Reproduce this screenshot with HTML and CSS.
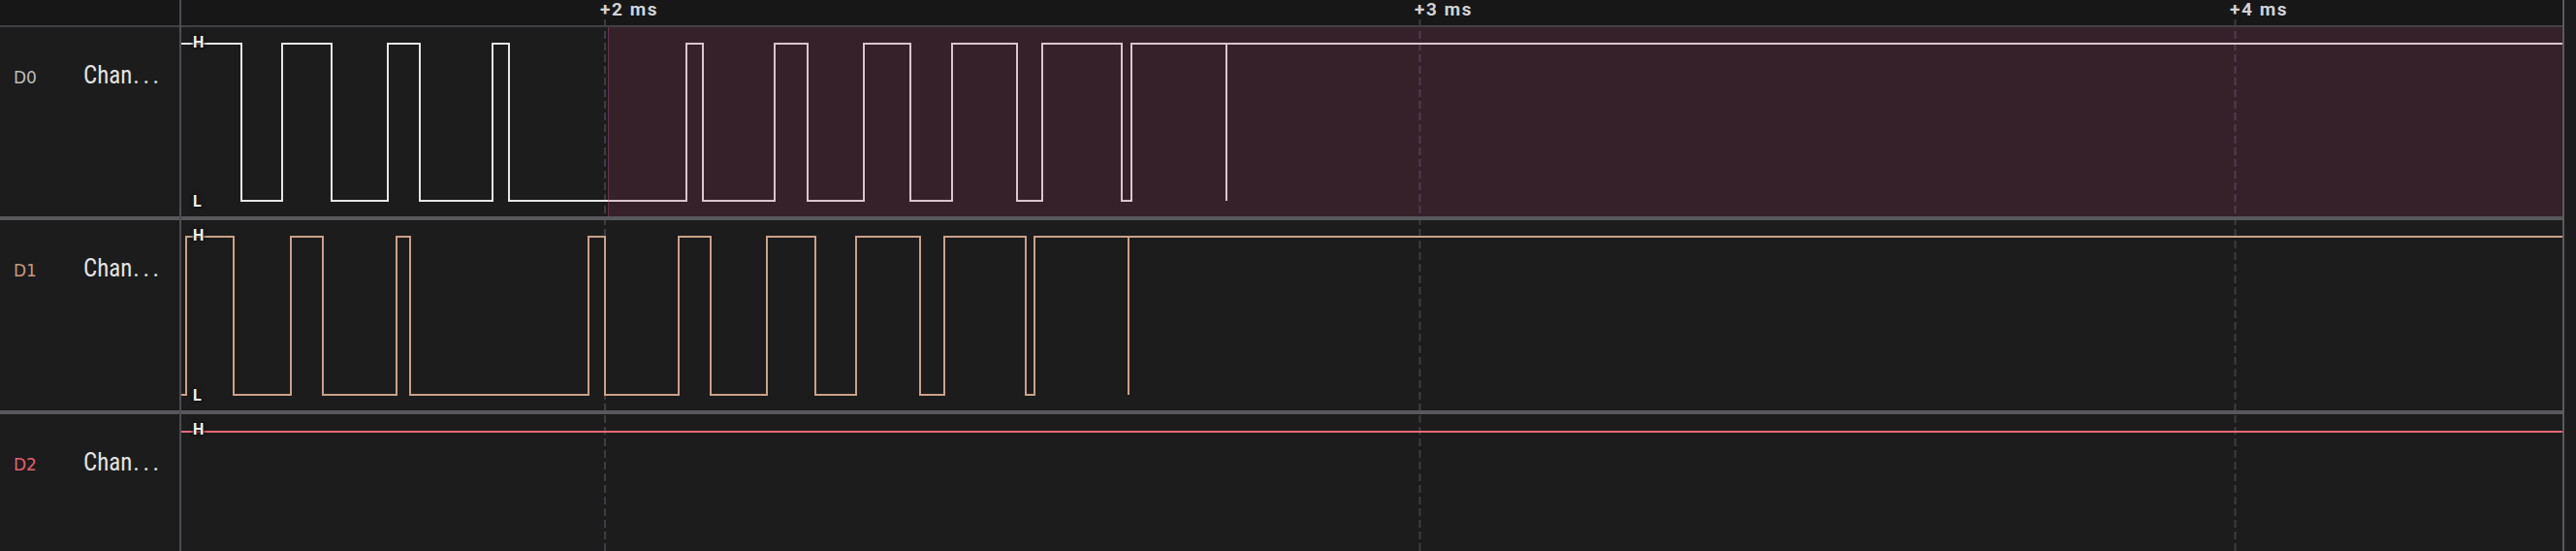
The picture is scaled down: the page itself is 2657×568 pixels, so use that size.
FILE: index.html
```html
<!DOCTYPE html>
<html lang="en">
<head>
<meta charset="utf-8">
<title>Logic analyzer</title>
<link rel="stylesheet" href="styles.css">
</head>
<body>
<div class="app">
  <div class="head">
    <span class="tick" style="left:619px">+2 ms</span>
    <span class="tick" style="left:1459px">+3 ms</span>
    <span class="tick" style="left:2300px">+4 ms</span>
  </div>
  <div class="hline head-line"></div>

  <div class="label row-a"><span class="ch ch0">D0</span><span class="name">Chan<span class="ell">...</span></span></div>
  <div class="track row-a">
    <svg class="wave" width="2456" height="195" viewBox="0 0 2456 195">
      <path class="w0" d="M0 17 H62 V179 H104 V17 H155 V179 H213 V17 H246 V179 H321 V17 H338 V179 H521 V17 H538 V179 H612 V17 H646 V179 H704 V17 H752 V179 H795 V17 H862 V179 H888 V17 H970 V179 H980 V17 H1078 V179 M1078 17 H2456"/>
    </svg>
    <div class="selection"></div>
    <span class="lvl hi">H</span>
    <span class="lvl lo">L</span>
  </div>
  <div class="hline div-a"></div>

  <div class="label row-b"><span class="ch ch1">D1</span><span class="name">Chan<span class="ell">...</span></span></div>
  <div class="track row-b">
    <svg class="wave" width="2456" height="196" viewBox="0 0 2456 196">
      <path class="w1" d="M0 180 H5 V17 H54 V180 H113 V17 H146 V180 H222 V17 H236 V180 H420 V17 H437 V180 H513 V17 H546 V180 H604 V17 H654 V180 H696 V17 H762 V180 H787 V17 H871 V180 H880 V17 H977 V180 M977 17 H2456"/>
    </svg>
    <span class="lvl hi">H</span>
    <span class="lvl lo lo-b">L</span>
  </div>
  <div class="hline div-b"></div>

  <div class="label row-c"><span class="ch ch2">D2</span><span class="name">Chan<span class="ell">...</span></span></div>
  <div class="track row-c">
    <svg class="wave" width="2456" height="141" viewBox="0 0 2456 141">
      <path class="w2" d="M0 18 H2456"/>
    </svg>
    <span class="lvl hi">H</span>
  </div>

  <svg class="grid" width="2456" height="568" viewBox="0 0 2456 568">
    <line x1="437" y1="20" x2="437" y2="568"/>
    <line x1="1277.5" y1="20" x2="1277.5" y2="568"/>
    <line x1="2118.5" y1="20" x2="2118.5" y2="568"/>
  </svg>

  <div class="vline v-left"></div>
  <div class="vline v-right"></div>
</div>
</body>
</html>
```

FILE: styles.css
```css
html, body {
  margin: 0;
  padding: 0;
  background: #1c1c1c;
  overflow: hidden;
}

.app {
  width: 2657px;
  height: 568px;
  display: grid;
  grid-template-columns: 185px 2px 2456px 2px 12px;
  grid-template-rows: 26px 2px 195px 4px 196px 4px 141px;
  background: #1c1c1c;
  font-family: Roboto, "Noto Sans", sans-serif;
}

.head {
  grid-column: 1 / 4;
  grid-row: 1;
  position: relative;
  background: #171717;
  z-index: 0;
}

.tick {
  position: absolute;
  top: 0;
  font-size: 19px;
  line-height: 19px;
  font-weight: 700;
  letter-spacing: 1.6px;
  color: #d2d2d2;
  white-space: nowrap;
}

.hline {
  grid-column: 1 / 5;
  z-index: 3;
}
.head-line { grid-row: 2; background: #414145; }
.div-a { grid-row: 4; background: #58585d; }
.div-b { grid-row: 6; background: #58585d; }

.vline {
  grid-row: 1 / -1;
  z-index: 4;
}
.v-left { grid-column: 2; background: #4d4d53; }
.v-right { grid-column: 4; background: #5a5a60; }

.row-a { grid-row: 3; }
.row-b { grid-row: 5; }
.row-c { grid-row: 7; }

.label {
  grid-column: 1;
  display: flex;
  align-items: baseline;
  padding: 38px 0 0 14px;
  line-height: 24px;
  overflow: hidden;
}

.ch {
  width: 72px;
  flex: none;
  font-family: "DejaVu Sans", sans-serif;
  font-size: 17px;
}
.ch0 { color: #bdbdbd; }
.ch1 { color: #c49b81; }
.ch2 { color: #e0606e; }

.name {
  font-family: Roboto, sans-serif;
  font-size: 25px;
  font-stretch: 85%;
  color: #e2e2e2;
  white-space: nowrap;
}
.ell {
  margin-left: 1px;
  letter-spacing: 3.5px;
}

.track {
  grid-column: 3;
  position: relative;
  z-index: 2;
  overflow: hidden;
}

.wave {
  display: block;
}
.wave path {
  fill: none;
  stroke-width: 2;
  stroke-linejoin: miter;
}
.w0 { stroke: #e6e6e6; }
.w1 { stroke: #c9a189; }
.w2 { stroke: #e9677a; }

.selection {
  position: absolute;
  left: 440px;
  top: 0;
  right: 0;
  bottom: 0;
  background: rgba(172, 60, 112, 0.19);
  border-left: 1px solid rgba(190, 80, 130, 0.35);
}

.lvl {
  position: absolute;
  left: 12px;
  font-size: 16px;
  line-height: 16px;
  font-weight: 700;
  color: #f2f2f2;
  text-shadow: 0 0 2px #141414, 0 0 3px #141414, 0 0 4px #141414;
}
.hi { top: 8px; }
.lo { top: 172px; }
.lo-b { top: 173px; }

.grid {
  grid-column: 3;
  grid-row: 1 / -1;
  z-index: 1;
  display: block;
}
.grid line {
  stroke: #3c3c41;
  stroke-width: 2;
  stroke-dasharray: 8 4;
}
```
